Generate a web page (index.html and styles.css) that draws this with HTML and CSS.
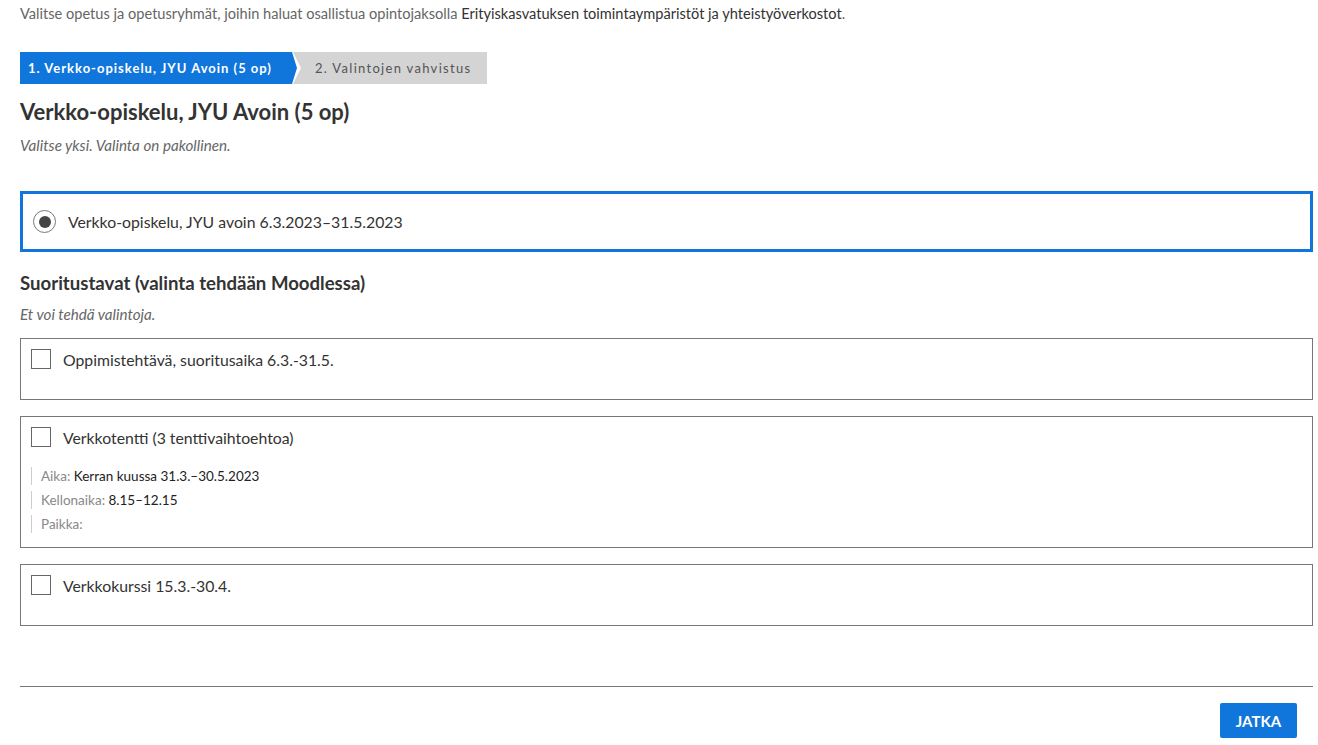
FILE: index.html
```html
<!DOCTYPE html>
<html lang="fi">
<head>
  <meta charset="UTF-8" />
  <title>Ilmoittautuminen</title>
  <link rel="stylesheet" href="styles.css">
</head>
<body>
  <p class="intro">Valitse opetus ja opetusryhmät, joihin haluat osallistua opintojaksolla <span class="course">Erityiskasvatuksen toimintaympäristöt ja yhteistyöverkostot</span>.</p>

  <div class="steps">
    <div class="step active">1. Verkko-opiskelu, JYU Avoin (5 op)</div>
    <div class="step">2. Valintojen vahvistus</div>
  </div>

  <h2 class="title">Verkko-opiskelu, JYU Avoin (5 op)</h2>
  <p class="hint">Valitse yksi. Valinta on pakollinen.</p>

  <label class="radio-box">
    <span class="radio"><span class="dot"></span></span>
    <span class="option-text">Verkko-opiskelu, JYU avoin 6.3.2023–31.5.2023</span>
  </label>

  <h3 class="subtitle">Suoritustavat (valinta tehdään Moodlessa)</h3>
  <p class="hint sub">Et voi tehdä valintoja.</p>

  <div class="check-box">
    <div class="check-row"><span class="check"></span><span class="option-text">Oppimistehtävä, suoritusaika 6.3.-31.5.</span></div>
  </div>

  <div class="check-box">
    <div class="check-row"><span class="check"></span><span class="option-text">Verkkotentti (3 tenttivaihtoehtoa)</span></div>
    <ul class="details">
      <li><span class="label">Aika:</span> Kerran kuussa 31.3.–30.5.2023</li>
      <li><span class="label">Kellonaika:</span> 8.15–12.15</li>
      <li><span class="label">Paikka:</span></li>
    </ul>
  </div>

  <div class="check-box">
    <div class="check-row"><span class="check"></span><span class="option-text">Verkkokurssi 15.3.-30.4.</span></div>
  </div>

  <div class="footer">
    <button class="next">JATKA</button>
  </div>
</body>
</html>
```

FILE: styles.css
```css
body { margin: 0; padding: 0 5px 0 20px; font-family: Lato, "Open Sans", sans-serif; color: #333; background: #fff; }
.intro { margin: 4px 0 0; font-size: 14.6px; line-height: 20px; color: #666; }
.intro .course { color: #333; }
.steps { display: flex; margin-top: 28px; height: 32px; }
.step { box-sizing: border-box; display: flex; align-items: center; height: 32px; white-space: nowrap; font-size: 13px; letter-spacing: 1.3px; color: #555; background: #d4d4d4; padding: 0 0 0 22px; width: 194px; clip-path: polygon(0 0, 100% 0, 100% 100%, 0 100%, 8px 50%); margin-left: -4px; }
.step.active { background: #1076db; color: #fff; font-weight: bold; letter-spacing: 1px; padding: 0 0 0 8px; margin-left: 0; clip-path: polygon(0 0, calc(100% - 5px) 0, 100% 50%, calc(100% - 5px) 100%, 0 100%); width: 277px; }
.title { margin: 13px 0 0; font-size: 22px; font-weight: bold; line-height: 30px; color: #333; }
.hint { margin: 8px 0 0; font-size: 15.2px; font-style: italic; color: #666; line-height: 20px; }
.radio-box { display: flex; align-items: center; margin-top: 36px; height: 55px; border: 3px solid #1076db; padding: 0 10px; }
.radio { width: 21px; height: 21px; border: 1px solid #777; border-radius: 50%; display: flex; align-items: center; justify-content: center; }
.radio .dot { width: 12px; height: 12px; border-radius: 50%; background: #444; }
.option-text { font-size: 15.8px; color: #333; margin-left: 12px; }
.subtitle { margin: 18px 0 0; font-size: 18.6px; font-weight: bold; line-height: 26px; color: #333; }
.hint.sub { margin-top: 8px; }
.check-box { border: 1px solid #777; margin-top: 14px; padding: 10px 10px 30px; }
.check-box + .check-box { margin-top: 16px; }
.check-row { display: flex; align-items: center; height: 20px; }
.check { width: 18px; height: 18px; border: 1px solid #666; }
.details { list-style: none; margin: 20px 0 -22px; padding: 0; font-size: 13.5px; color: #222; }
.details li { border-left: 1px solid #ccc; padding-left: 9px; line-height: 18px; margin-bottom: 6px; }
.details .label { color: #888; }
.footer { border-top: 1px solid #777; margin-top: 60px; display: flex; justify-content: flex-end; padding: 16px 16px 0 0; }
.next { background: #1076db; color: #fff; border: none; border-radius: 2px; font-family: inherit; font-size: 15px; font-weight: bold; width: 77px; height: 35px; cursor: pointer; }
```
